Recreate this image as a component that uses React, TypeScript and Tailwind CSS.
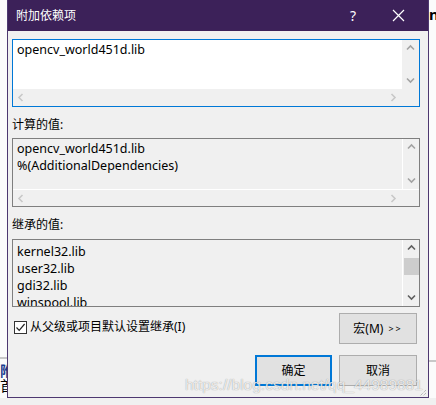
import React from 'react';

const font = "font-['Noto_Sans','Noto_Sans_CJK_SC',sans-serif]";

type Dir = 'up' | 'down' | 'left' | 'right';

const Chevron = ({ dir, color }: { dir: Dir; color: string }) => {
  const d = {
    up: 'M1 5.5 L4.5 2 L8 5.5',
    down: 'M1 2.5 L4.5 6 L8 2.5',
    left: 'M5.5 1 L2 4.5 L5.5 8',
    right: 'M2.5 1 L6 4.5 L2.5 8',
  }[dir];
  return (
    <svg width="9" height="9" viewBox="0 0 9 9">
      <path d={d} fill="none" stroke={color} strokeWidth="1.6" />
    </svg>
  );
};

interface BoxProps {
  lines: string[];
  height: string;
  focused?: boolean;
  hScroll?: boolean;
  readOnly?: boolean;
  thumb?: boolean;
}

const ListBox = ({ lines, height, focused, hScroll, readOnly, thumb }: BoxProps) => {
  const arrow = thumb ? '#606060' : '#a3a3a3';
  return (
    <div
      className={`w-[408px] ${height} flex flex-col border ${
        focused ? 'border-[#0078d7]' : 'border-[#7f7f7f]'
      } ${readOnly ? 'bg-[#f0f0f0]' : 'bg-white'}`}
    >
      <div className="flex flex-1 min-h-0">
        <div
          className={`flex-1 overflow-hidden pl-[4px] ${
            thumb ? 'pt-[3px] leading-[17px]' : 'pt-[2px] leading-[16.67px]'
          } text-[12.5px] text-black`}
        >
          {lines.map((l) => (
            <div key={l} className="whitespace-nowrap">
              {l}
            </div>
          ))}
        </div>
        <div className={`w-[17px] flex flex-col bg-[#f0f0f0] ${readOnly ? 'border-l border-white' : ''}`}>
          <div className="h-[17px] flex items-center justify-center">
            <Chevron dir="up" color={arrow} />
          </div>
          <div className="flex-1 flex flex-col items-center">
            {thumb && <div className="w-[15px] h-[17px] bg-[#cdcdcd] mt-[1px]" />}
          </div>
          <div className="h-[17px] flex items-center justify-center">
            <Chevron dir="down" color={arrow} />
          </div>
        </div>
      </div>
      {hScroll && (
        <div className={`h-[17px] flex bg-[#f0f0f0] ${readOnly ? 'border-t border-white' : ''}`}>
          <div className="flex-1 flex items-center justify-between px-[4px]">
            <Chevron dir="left" color="#c8c8c8" />
            <Chevron dir="right" color="#c8c8c8" />
          </div>
          <div className="w-[17px]" />
        </div>
      )}
    </div>
  );
};

const Button = ({ children, w, primary }: { children: React.ReactNode; w: string; primary?: boolean }) => (
  <div
    className={`${w} h-[31px] flex items-center justify-center bg-[#e1e1e1] text-[12px] text-black ${
      primary ? 'border-2 border-[#0078d7]' : 'border border-[#adadad]'
    }`}
  >
    {children}
  </div>
);

export default function App() {
  return (
    <div className={`relative w-[436px] h-[405px] overflow-hidden flex bg-[#f0f0f0] ${font}`}>
      {/* page behind the dialog, left edge */}
      <div className="w-[7px] h-[398px] flex flex-col overflow-hidden bg-[#fbfbfb]">
        <div className="h-[357px]" />
        <div className="h-[2px] bg-[#c8c8c8]" />
        <div className="mt-[4px] text-[14px] leading-[15px] font-bold text-[#1a3d8f] whitespace-nowrap">附</div>
        <div className="text-[14px] leading-[15px] text-black whitespace-nowrap">首</div>
      </div>

      {/* dialog */}
      <div className="w-[422px] h-[398px] flex flex-col border-x border-b border-[#4d3870] bg-[#f0f0f0]">
        <div className="h-[31px] flex items-center bg-[#3c2159] text-white">
          <span className="pl-[8px] text-[12px] flex-1">附加依赖项</span>
          <span className="w-[30px] text-center text-[14px]">?</span>
          <span className="w-[30px] ml-[15px] mr-[15px] flex justify-center">
            <svg width="13" height="13" viewBox="0 0 13 13">
              <path d="M1 1 L12 12 M12 1 L1 12" stroke="white" strokeWidth="1.2" />
            </svg>
          </span>
        </div>

        <div className="flex flex-col pl-[4px]">
          <div className="mt-[8px]">
            <ListBox lines={['opencv_world451d.lib']} height="h-[68px]" focused hScroll />
          </div>
          <div className="mt-[9px] h-[17px] leading-[17px] text-[12px] text-black">计算的值:</div>
          <div className="mt-[5px]">
            <ListBox
              lines={['opencv_world451d.lib', '%(AdditionalDependencies)']}
              height="h-[69px]"
              hScroll
              readOnly
            />
          </div>
          <div className="mt-[9px] h-[17px] leading-[17px] text-[12px] text-black">继承的值:</div>
          <div className="mt-[6px]">
            <ListBox
              lines={['kernel32.lib', 'user32.lib', 'gdi32.lib', 'winspool.lib']}
              height="h-[68px]"
              readOnly
              thumb
            />
          </div>

          <div className="mt-[6px] w-[408px] flex items-start">
            <div className="mt-[5px] ml-[2px] flex items-center gap-[3px] text-[12px] text-black">
              <div className="w-[13px] h-[13px] border border-[#333333] bg-white flex items-center justify-center">
                <svg width="11" height="11" viewBox="0 0 11 11">
                  <path d="M1.5 5.5 L4.2 8.3 L9.6 2" fill="none" stroke="#222222" strokeWidth="1.2" />
                </svg>
              </div>
              <span>从父级或项目默认设置继承(I)</span>
            </div>
            <div className="ml-auto mr-[3px]">
              <Button w="w-[78px]">
                宏(M)
                <span className="ml-[5px] text-[9px] tracking-[2px]">&gt;&gt;</span>
              </Button>
            </div>
          </div>

          <div className="mt-[11px] w-[408px] flex justify-end gap-[7px] pr-[3px]">
            <Button w="w-[77px]" primary>
              确定
            </Button>
            <Button w="w-[78px]">取消</Button>
          </div>
        </div>
      </div>

      {/* page behind the dialog, right edge */}
      <div className="flex-1 h-[398px] flex flex-col overflow-hidden bg-[#fbfbfb]">
        <div className="mt-[5px] text-[15px] leading-[18px] font-bold text-black whitespace-nowrap">na</div>
        <div className="mt-[337px] h-[2px] bg-[#c8c8c8]" />
      </div>

      {/* csdn watermark */}
      <div className="absolute left-[185px] top-[376px] text-[15.5px] leading-[18px] font-['Liberation_Sans',sans-serif] text-white/80 [text-shadow:0_0_1px_rgba(0,0,0,0.45)] whitespace-nowrap pointer-events-none">
        https://blog.csdn.net/qq_44989881
      </div>

      {/* resize grip */}
      <svg className="absolute left-[419px] top-[389px]" width="8" height="8" viewBox="0 0 8 8">
        <path d="M7 1 L1 7 M7 4 L4 7" stroke="#a0a0a0" strokeWidth="1" strokeDasharray="1 1" />
      </svg>
    </div>
  );
}
